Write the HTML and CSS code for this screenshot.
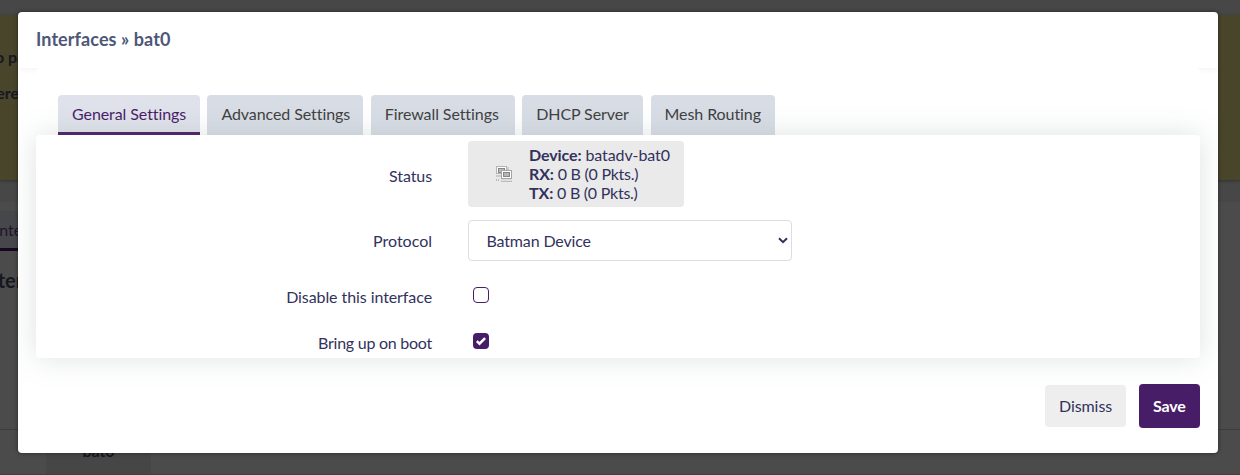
FILE: index.html
```html
<!DOCTYPE html>
<html lang="en">
<head>
<meta charset="utf-8">
<title>Interfaces » bat0</title>
<link rel="stylesheet" href="styles.css">
</head>
<body>
<div class="page">
  <div class="alert"><p>No password set!</p><p>There is no password</p></div>
  <div class="band"></div>
  <div class="page-tab">Interfaces</div>
  <h2 class="page-title">Interfaces</h2>
  <div class="page-row"><div class="iface">bat0</div></div>
</div>
<div class="modal">
  <h4 class="modal-title">Interfaces » bat0</h4>
  <div class="tabs">
    <div class="tab active">General Settings</div>
    <div class="tab">Advanced Settings</div>
    <div class="tab">Firewall Settings</div>
    <div class="tab">DHCP Server</div>
    <div class="tab">Mesh Routing</div>
  </div>
  <div class="panel">
    <div class="row status-row">
      <div class="label">Status</div>
      <div class="badge">
        <svg class="device-icon" width="16" height="16" viewBox="0 0 16 16" shape-rendering="crispEdges">
          <path fill="#b4b4b4" d="M0 0h11v8H0z"/><path fill="#fff" d="M1 1h9v6H1z"/><path fill="#858585" d="M2 2h7v5H2z"/><path fill="#bbb" d="M3 3h5v3H3z"/>
          <path fill="#ccc" d="M11 1h2v3h-2zM0 9h5v2H0z"/><path fill="#b8b8b8" d="M0 13h1v2H0zM2 13h1v2H2z"/>
          <path fill="#a4a4a4" d="M5 4h11v9H5z"/><path fill="#fff" d="M6 5h9v7H6z"/><path fill="#858585" d="M7 6h7v5H7z"/><path fill="#b4b4b4" d="M8 7h5v3H8z"/>
          <path fill="#ddd" d="M5 13h11v2H5z"/><path fill="#bbb" d="M5 15h11v1H5z"/>
        </svg>
        <div><b>Device:</b> batadv-bat0<br><b>RX:</b><span class="count"> 0 B (0 Pkts.)</span><br><b>TX:</b><span class="count"> 0 B (0 Pkts.)</span></div>
      </div>
    </div>
    <div class="row protocol-row">
      <div class="label">Protocol</div>
      <div class="select"><span>Batman Device</span>
        <svg width="10" height="7" viewBox="0 0 10 7"><path d="M1 1.2 5 5.2 9 1.2" fill="none" stroke="#32325d" stroke-width="2"/></svg>
      </div>
    </div>
    <div class="row disable-row">
      <div class="label">Disable this interface</div><div class="check"></div>
    </div>
    <div class="row boot-row">
      <div class="label">Bring up on boot</div>
      <div class="check checked"><svg width="16" height="16" viewBox="0 0 16 16"><path d="M3.8 8.2 6.5 10.7 12.1 5.1" fill="none" stroke="#fff" stroke-width="2.5"/></svg></div>
    </div>
  </div>
  <div class="actions">
    <div class="btn">Dismiss</div>
    <div class="btn save">Save</div>
  </div>
</div>
</body>
</html>
```
FILE: styles.css
```css
* { box-sizing: border-box; }
body {
  margin: 0;
  height: 475px;
  overflow: hidden;
  background: #4b4b4b;
  color: #32325d;
  font: 16px/19px Lato, sans-serif;
  letter-spacing: -.08px;
}
.page {
  height: 475px;
  padding-top: 15px;
  background: linear-gradient(#474747 202px, #4b4b4b 202px);
  color: #17171f;
}
.alert {
  height: 165px;
  padding-top: 32px;
  background: #48452b;
  box-shadow: 0 1px 3px #303030;
  font-weight: bold;
}
.alert p { margin: 0 0 17px -17px; white-space: nowrap; }
.alert p + p { margin-left: -22px; }
.band { height: 31px; }
.page-tab {
  width: 80px;
  height: 40px;
  padding-top: 9px;
  background: #45474a;
  border-bottom: 3px solid #170822;
  color: #25102f;
  text-indent: -5px;
}
.page-title { margin: 17px 0 0 -19px; font-size: 20px; line-height: 24px; }
.page-row {
  height: 46px;
  margin-top: 137px;
  border-top: 1px solid #3d3d3d;
  border-bottom: 1px solid #414141;
  padding-left: 46px;
}
.iface {
  width: 105px;
  height: 44px;
  padding-top: 11px;
  background: #464646;
  text-align: center;
  font-weight: bold;
}
.modal {
  position: absolute;
  left: 18px;
  top: 12px;
  width: 1200px;
  height: 441px;
  padding: 0 18px;
  border-radius: 4px;
  background: #fff;
  box-shadow: 0 0 4px rgba(0, 0, 0, .45);
  overflow: hidden;
}
.modal-title {
  height: 56px;
  margin: 0 -18px;
  padding: 16px 18px 0;
  color: #4d5778;
  font-size: 18px;
  letter-spacing: .08px;
  line-height: 23px;
  box-shadow: 0 0 8px rgba(0, 0, 0, .07);
}
.tabs {
  display: grid;
  grid-template-columns: 142px 156px 144px 121px 124px;
  column-gap: 7.4px;
  height: 67px;
  padding: 27px 22px 0;
  background: #fff;
  border-radius: 4px;
}
.tab {
  height: 40px;
  padding: 9px 14px 0;
  border-radius: 4px 4px 0 0;
  background: #d8dde5;
  color: #404040;
  letter-spacing: -.08px;
  white-space: nowrap;
}
.tab.active {
  background: #dfe2ea;
  border-bottom: 3px solid #481d67;
  color: #481d67;
}
.tabs, .panel { position: relative; }
.panel {
  height: 223px;
  border-radius: 4px;
  background: #fff;
  box-shadow: 0 0 28px rgba(125, 140, 142, .25);
}
.row { display: flex; align-items: flex-start; }
.label { width: 396px; margin-right: 36px; text-align: right; }
.status-row { height: 85px; padding-top: 6px; }
.status-row .label { padding-top: 25px; }
.badge {
  display: flex;
  align-items: center;
  width: 216px;
  height: 66px;
  padding: 0 0 2px 28px;
  gap: 17px;
  border-radius: 4px;
  background: #eaeaea;
  letter-spacing: -.1px;
  white-space: nowrap;
}
.count { letter-spacing: -.25px; }
.device-icon { position: relative; top: 1px; }
.protocol-row { height: 67px; }
.protocol-row .label { padding-top: 11px; letter-spacing: 0; }
.select {
  display: flex;
  align-items: center;
  justify-content: space-between;
  width: 324px;
  height: 41px;
  padding: 0 3px 0 17.5px;
  border: 1px solid #dcdce4;
  border-radius: 4px;
  letter-spacing: -.15px;
}
.disable-row { height: 46px; }
.row .check {
  width: 16px;
  height: 16px;
  margin-left: 5px;
  border: 1px solid #481d67;
  border-radius: 4px;
}
.boot-row .label { letter-spacing: -.25px; }
.row .checked { border: 0; background: #481d67; }
.check svg { display: block; }
.actions {
  display: flex;
  justify-content: flex-end;
  align-items: center;
  gap: 13px;
  padding-top: 26px;
}
.btn {
  width: 81px;
  height: 42px;
  padding: 11px 14px;
  border-radius: 4px;
  background: #eee;
}
.save { width: 61px; height: 44px; padding-top: 12px; background: #481d67; color: #fff; font-weight: bold; letter-spacing: -.2px; }
```
